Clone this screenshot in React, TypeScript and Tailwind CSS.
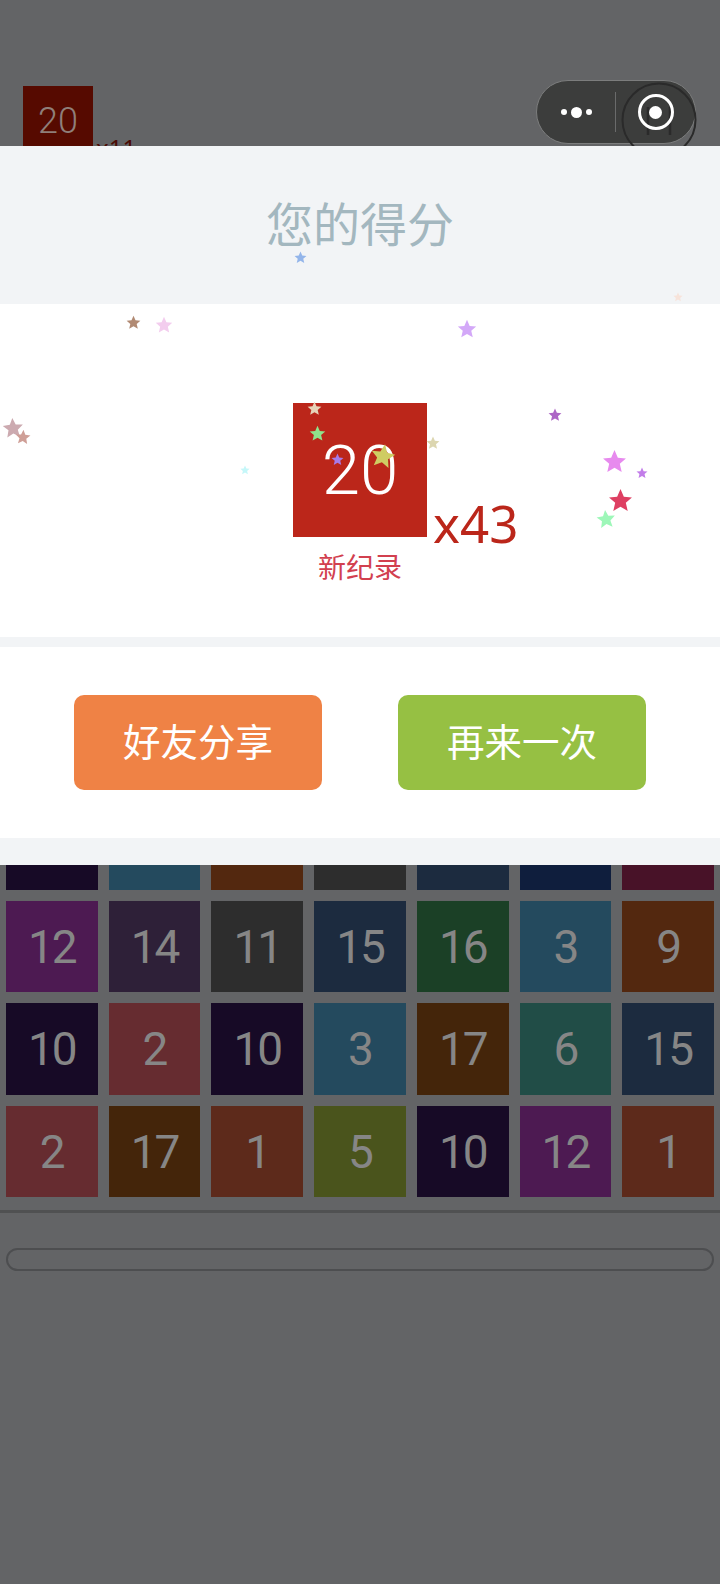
const FONT = "font-['Noto_Sans','Noto_Sans_CJK_SC',sans-serif]";
const DIGITS = "font-['Roboto','Noto_Sans',sans-serif]";

// dimmed colours, as they look behind the mask
const TILE_COLORS: Record<number, string> = {
  1: "bg-[#5d2a1b]",
  2: "bg-[#662c30]",
  3: "bg-[#244a5e]",
  5: "bg-[#4a541c]",
  6: "bg-[#214d47]",
  8: "bg-[#0f1e3d]",
  9: "bg-[#53280f]",
  10: "bg-[#170a26]",
  11: "bg-[#2d2d2d]",
  12: "bg-[#4d1a52]",
  13: "bg-[#481228]",
  14: "bg-[#2e2038]",
  15: "bg-[#1c2b3f]",
  16: "bg-[#1b4026]",
  17: "bg-[#44250a]",
};

const BOARD = [10, 3, 9, 11, 15, 8, 13, 12, 14, 11, 15, 16, 3, 9, 10, 2, 10, 3, 17, 6, 15, 2, 17, 1, 5, 10, 12, 1];

// x, y = star centre, s = size
const STARS = [
  { x: 300, y: 257, s: 13, c: "#93b5ea", r: 0 },
  { x: 678, y: 297, s: 10, c: "#f7e3da", r: 0 },
  { x: 133, y: 322, s: 15, c: "#b18a73", r: 0 },
  { x: 164, y: 325, s: 18, c: "#f3cdee", r: 0 },
  { x: 13, y: 428, s: 22, c: "#ccaab0", r: -4 },
  { x: 23, y: 437, s: 16, c: "#cf9f97", r: 4 },
  { x: 245, y: 470, s: 10, c: "#c5f7f9", r: 0 },
  { x: 314, y: 408, s: 15, c: "#e6d3b8", r: 0 },
  { x: 317, y: 433, s: 17, c: "#8fe38b", r: 0 },
  { x: 337, y: 459, s: 13, c: "#a77be8", r: 0 },
  { x: 467, y: 329, s: 20, c: "#d3a8f8", r: 0 },
  { x: 383, y: 456, s: 26, c: "#cfcc63", r: 10 },
  { x: 433, y: 443, s: 14, c: "#dcd6b0", r: 0 },
  { x: 555, y: 415, s: 14, c: "#ad65c6", r: 0 },
  { x: 614, y: 461, s: 25, c: "#e78aee", r: 0 },
  { x: 642, y: 473, s: 12, c: "#c27de9", r: 0 },
  { x: 620, y: 500, s: 25, c: "#de3f62", r: 0 },
  { x: 606, y: 519, s: 20, c: "#9df7b8", r: -6 },
];

function Star({ x, y, s, c, r }: { x: number; y: number; s: number; c: string; r: number }) {
  return (
    <svg
      viewBox="0 0 24 24"
      className="absolute"
      style={{ left: x - s / 2, top: y - s / 2, width: s, height: s, transform: `rotate(${r}deg)` }}
    >
      <path d="M12 1l3.2 7.300 7.800.7-5.900 5.200 1.800 7.800L12 17.900 5.100 22l1.800-7.800L1 9l7.800-.7z" fill={c} />
    </svg>
  );
}

function Capsule() {
  return (
    <div className="absolute left-[536px] top-[80px] flex h-[64px] w-[160px] items-center rounded-full border-[1.5px] border-[#7c7d7d] bg-[#3c3d3c]">
      <div className="flex w-[77.500px] items-center justify-center gap-[4px] pl-[1px]">
        <div className="h-[6px] w-[6px] rounded-full bg-white" />
        <div className="h-[11px] w-[11px] rounded-full bg-white" />
        <div className="h-[6px] w-[6px] rounded-full bg-white" />
      </div>
      <div className="h-[40px] w-[1.5px] bg-[#6a6b6b]" />
      <div className="flex flex-1 items-center justify-center">
        <div className="relative z-10 flex h-[36px] w-[36px] items-center justify-center rounded-full border-[3px] border-white">
          <div className="h-[13px] w-[13px] rounded-full bg-white" />
        </div>
      </div>
    </div>
  );
}

export default function App() {
  return (
    <div className={`relative h-[1584px] w-[720px] overflow-hidden bg-[#636466] ${FONT}`}>
      {/* game screen behind the mask */}
      <div className="pl-[23px] pt-[86px]">
        <div className="flex items-end">
          <div className={`flex h-[70px] w-[70px] items-center justify-center bg-[#560a00] text-[36px] font-light text-[#8f7f7a] ${DIGITS}`}>20</div>
          <span className="ml-[3px] mb-[-5px] text-[24px] leading-[26px] text-[#4a0a04]">x11</span>
        </div>
      </div>

      <div className="mt-[642px] grid grid-cols-7 gap-x-[11.2px] gap-y-[11px] px-[6px]">
        {BOARD.map((n, i) => (
          <div key={i} className={`flex h-[91.5px] items-center justify-center pt-[2px] text-[46px] font-normal tracking-[-2px] text-[#868686] ${DIGITS} ${TILE_COLORS[n]}`}>
            {n}
          </div>
        ))}
      </div>

      <div className="mt-[13px] h-[3px] bg-[#505152]" />
      <div className="mx-[6px] mt-[35px] h-[23px] rounded-full border-[2.5px] border-[#4d4e50]" />

      <Capsule />

      {/* icon of the page under the capsule */}
      <svg className="absolute left-[610px] top-[76px]" width="100" height="70" viewBox="0 0 100 70">
        <circle cx="49" cy="44" r="36.500" fill="none" stroke="#2a2a2a" strokeWidth="2" />
        <path d="M38 31v28M60 31v28" stroke="#2a2a2a" strokeWidth="2.500" />
      </svg>

      {/* result dialog */}
      <div className="absolute inset-x-0 top-[146px] bg-[#f2f4f6]">
        <div className="flex h-[158px] items-center justify-center pb-[2px] text-[47px] text-[#a3b7bf]">您的得分</div>

        <div className="flex h-[333px] flex-col items-center bg-white pt-[99px]">
          <div className={`relative flex h-[134px] w-[134px] items-center justify-center bg-[#bb261a] pt-[2px] text-[69px] font-light text-white ${DIGITS}`}>
            20
            <span className={`absolute bottom-[-24px] left-[140px] text-[51px] font-normal text-[#bb261a] ${FONT}`}>x43</span>
          </div>
          <div className="mt-[12px] text-[28px] leading-[36px] text-[#d2404f]">新纪录</div>
        </div>

        <div className="mt-[10px] flex h-[191px] items-center justify-center gap-[76px] bg-white">
          <div className="flex h-[95px] w-[248px] items-center justify-center rounded-[10px] bg-[#ef8245] text-[37.5px] text-white">好友分享</div>
          <div className="flex h-[95px] w-[248px] items-center justify-center rounded-[10px] bg-[#96c043] text-[37.5px] text-white">再来一次</div>
        </div>

        <div className="h-[27px]" />
      </div>

      {STARS.map((star, i) => (
        <Star key={i} {...star} />
      ))}
    </div>
  );
}
